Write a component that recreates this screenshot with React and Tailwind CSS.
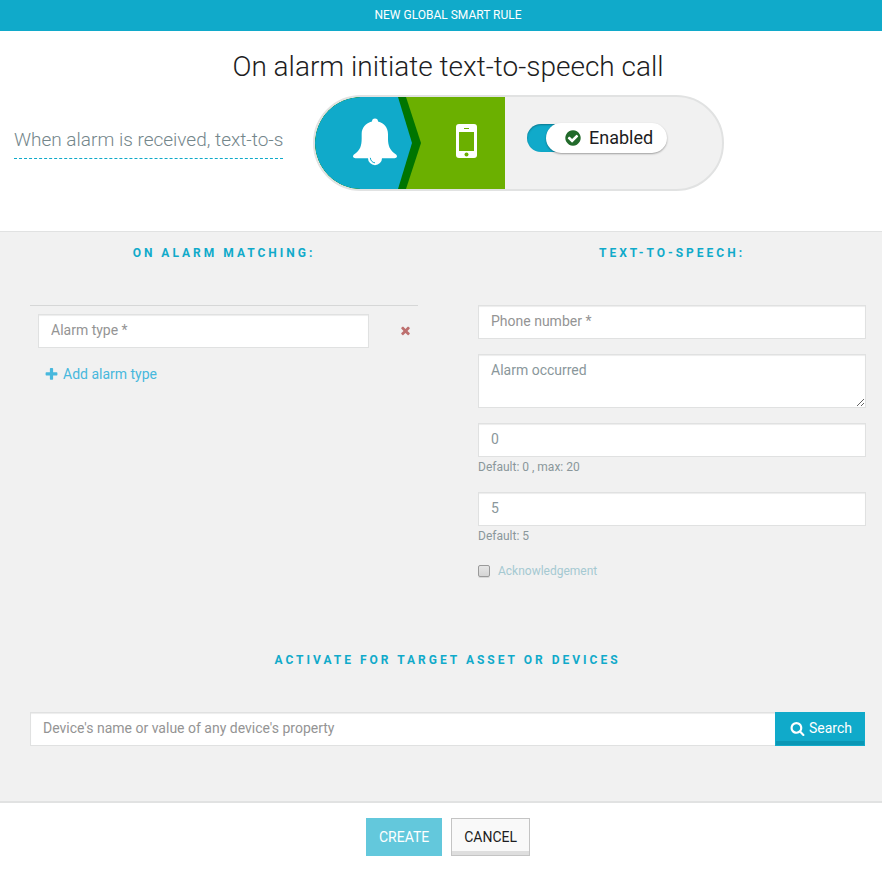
import React, { useState } from "react";

const ICONS = {
  times:
    "M1490 1322q0 40-28 68l-136 136q-28 28-68 28t-68-28l-294-294-294 294q-28 28-68 28t-68-28l-136-136q-28-28-28-68t28-68l294-294-294-294q-28-28-28-68t28-68l136-136q28-28 68-28t68 28l294 294 294-294q28-28 68-28t68 28l136 136q28 28 28 68t-28 68l-294 294 294 294q28 28 28 68z",
  plus:
    "M1600 736v192q0 40-28 68t-68 28h-416v416q0 40-28 68t-68 28h-192q-40 0-68-28t-28-68v-416h-416q-40 0-68-28t-28-68v-192q0-40 28-68t68-28h416v-416q0-40 28-68t68-28h192q40 0 68 28t28 68v416h416q40 0 68 28t28 68z",
  search:
    "M1216 832q0-185-131.5-316.5t-316.5-131.5-316.5 131.5-131.5 316.5 131.5 316.5 316.5 131.5 316.5-131.5 131.5-316.5zm512 832q0 52-38 90t-90 38q-54 0-90-38l-343-342q-179 124-399 124-143 0-273.5-55.5t-225-150-150-225-55.5-273.5 55.5-273.5 150-225 225-150 273.5-55.5 273.5 55.5 225 150 150 225 55.5 273.5q0 220-124 399l343 343q37 37 37 90z",
  check:
    "M1412 734q0-28-18-46l-91-90q-19-19-45-19t-45 19l-408 407-226-226q-19-19-45-19t-45 19l-91 90q-18 18-18 46 0 27 18 45l362 362q19 19 45 19 27 0 46-19l543-543q18-18 18-45zm252 162q0 209-103 385.5t-279.5 279.5-385.5 103-385.5-103-279.5-279.5-103-385.5 103-385.5 279.5-279.5 385.5-103 385.5 103 279.5 279.5 103 385.5z",
};

function Icon({ name, className }) {
  return (
    <svg viewBox="0 0 1792 1792" fill="currentColor" aria-hidden="true" className={className}>
      <path d={ICONS[name]} />
    </svg>
  );
}

// Bell on blue, chevron divider, phone on green
function RuleArtwork() {
  return (
    <svg viewBox="0 0 190 92" aria-hidden="true" className="h-[92px] w-[190px] shrink-0 rounded-l-full">
      <rect width="190" height="92" fill="#6bb000" />
      <path d="M0 0H91L106 46L91 92H0Z" fill="#007500" />
      <path d="M0 0H83L97 46L83 92H0Z" fill="#10aaca" />
      <g transform="translate(38 20.500) scale(0.3333)">
        <path
          d="M57 12a9 9 0 0 1 18 0C94 16 105 31 105 50v14c0 21 6 34 19 43l6 5c4 5 2 10-5 10H87a21 21 0 0 1-42 0H7c-7 0-9-5-5-10l6-5C21 98 26 85 26 64V50C26 31 38 16 57 12Z"
          fill="#fff"
        />
        <path d="M52 121c1 9 6 14 14 15" fill="none" stroke="#10aaca" strokeWidth="3" />
      </g>
      <g transform="translate(141 27)">
        <rect width="21" height="34" rx="3" fill="#fff" />
        <rect x="3" y="8" width="15" height="19" fill="#6bb000" />
        <path d="M8 4.5h5" stroke="#6bb000" />
        <circle cx="10.500" cy="30.500" r="2" fill="#6bb000" />
      </g>
    </svg>
  );
}

const field =
  "block w-full rounded-none border border-[#e0e1e1] bg-white px-3 text-sm text-[#8a979b] shadow-[inset_0_1px_1px_rgba(0,0,0,0.075)] outline-none placeholder:text-[#949494]";
const line = "h-[34px] pb-0.5";

function SectionTitle({ children }) {
  return (
    <h2 className="text-center text-xs leading-4 font-bold tracking-[3px] text-[#10aaca] uppercase">
      {children}
    </h2>
  );
}

export default function App() {
  const [enabled, setEnabled] = useState(true);
  return (
    <div className="bg-white font-[Roboto,'Open_Sans',sans-serif] text-[#1d1d22]">
      <header className="bg-[#10aaca] pt-[7px] pb-2 pl-[14px] text-center text-xs leading-4 text-white uppercase">
        New global smart rule
      </header>

      <section className="pb-10 pl-[14px]">
        <h1 className="pt-[18px] text-center text-[28px] leading-9 font-light">
          On alarm initiate text-to-speech call
        </h1>
        <div className="mt-[10px] flex items-start gap-[30px]">
          <input
            aria-label="Rule description"
            defaultValue="When alarm is received, text-to-s"
            className="mt-[27px] h-[37px] w-[269px] border-b border-dashed border-[#10aaca] pb-0.5 text-[19px] font-light text-[#74868b] outline-none"
          />
          <div className="flex w-[411px] items-start overflow-hidden rounded-full border-2 border-[#e1e2e2] bg-[#f1f1f1]">
            <RuleArtwork />
            <button
              type="button"
              role="switch"
              aria-checked={enabled}
              onClick={() => setEnabled(!enabled)}
              className="mt-[26px] ml-[22px] flex h-[30px] items-center"
            >
              <span className="h-7 w-10 rounded-l-full bg-[#10aaca] shadow-[inset_0_1px_2px_rgba(0,0,0,0.3)]" />
              <span className="-ml-[21px] flex h-[30px] w-[121px] items-center gap-[7px] rounded-full bg-white pl-[18px] text-lg shadow-[0_1px_2px_rgba(0,0,0,0.35)]">
                <Icon name="check" className="h-[18px] w-[18px] text-[#226a2b]" />
                {enabled ? "Enabled" : "Disabled"}
              </span>
            </button>
          </div>
        </div>
      </section>

      <main className="border-t border-b-2 border-[#e1e2e2] bg-[#f1f1f1] pb-[55px] pl-[14px]">
        <div className="grid grid-cols-2">
          <section className="pt-[13px] pr-[30px] pl-4">
            <SectionTitle>On alarm matching:</SectionTitle>
            <div className="mt-11 flex items-center justify-between border-t border-[#d6d7d7] pt-2 pr-[6px] pl-2">
              <input aria-label="Alarm type" placeholder="Alarm type *" className={`${field} ${line} max-w-[331px]`} />
              <button type="button" aria-label="Remove alarm type" className="pb-0.5 text-[#bd6f6e]">
                <Icon name="times" className="h-[13px] w-[13px]" />
              </button>
            </div>
            <button type="button" className="mt-4 ml-[14px] flex items-center gap-1 text-sm text-[#47b8dd]">
              <Icon name="plus" className="h-[15px] w-[15px]" />
              Add alarm type
            </button>
          </section>

          <section className="pt-[13px] pr-4 pl-[30px]">
            <SectionTitle>Text-to-speech:</SectionTitle>
            <input aria-label="Phone number" placeholder="Phone number *" className={`${field} ${line} mt-11`} />
            <textarea aria-label="Message" defaultValue="Alarm occurred" className={`${field} mt-[15px] h-[54px] resize-y py-[5px]`} />
            <input aria-label="Retries" defaultValue="0" className={`${field} ${line} mt-[15px]`} />
            <p className="mt-0.5 text-xs leading-4 text-[#8a979b]">Default: 0 , max: 20</p>
            <input aria-label="Retry interval" defaultValue="5" className={`${field} ${line} mt-[17px]`} />
            <p className="mt-0.5 text-xs leading-4 text-[#8a979b]">Default: 5</p>
            <label className="mt-[19px] flex items-center gap-2 text-xs leading-4 text-[#a5c9d1]">
              <input
                type="checkbox"
                className="h-3 w-3 appearance-none rounded-xs border border-[#9a9a9a] bg-linear-to-b from-[#e6e6e6] to-[#d5d5d5] shadow-[0_1px_0_rgba(0,0,0,0.1)] checked:from-[#10aaca] checked:to-[#10aaca]"
              />
              Acknowledgement
            </label>
          </section>
        </div>

        <section className="mt-[73px] pr-[17px] pl-4">
          <SectionTitle>Activate for target asset or devices</SectionTitle>
          <form className="mt-11 flex" onSubmit={(e) => e.preventDefault()}>
            <input
              aria-label="Device search"
              placeholder="Device's name or value of any device's property"
              className={`${field} ${line} min-w-0 flex-1 border-r-0`}
            />
            <button
              type="submit"
              className="flex h-[34px] w-[90px] items-center justify-center gap-1 border border-[#10aaca] bg-[#10aaca] pb-0.5 pl-0.5 text-sm text-white shadow-[inset_0_-4px_0_#0a97b5]"
            >
              <Icon name="search" className="h-[15px] w-[15px]" />
              Search
            </button>
          </form>
        </section>
      </main>

      <footer className="flex justify-center gap-[9px] py-[15px] pl-[14px] text-sm">
        <button type="button" className="h-[38px] bg-[#63c8dc] px-[13px] text-white uppercase">
          Create
        </button>
        <button
          type="button"
          className="h-[38px] border border-[#c4c4c4] bg-[#f9f9f9] px-3 uppercase shadow-[inset_0_-4px_0_#dedede]"
        >
          Cancel
        </button>
      </footer>
    </div>
  );
}
